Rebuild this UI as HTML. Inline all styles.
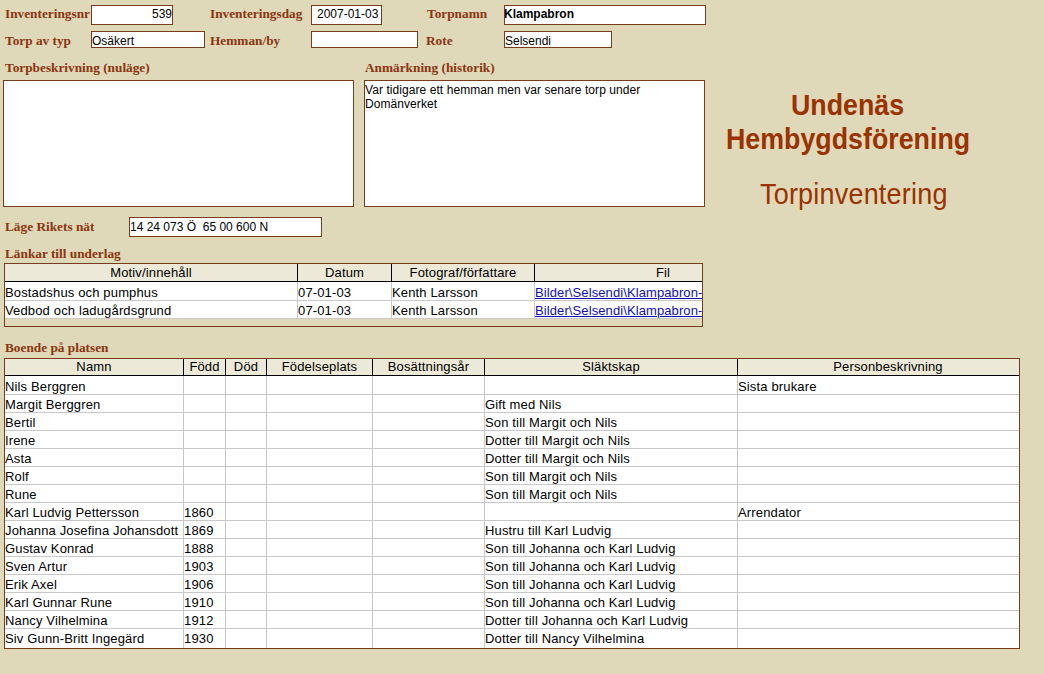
<!DOCTYPE html>
<html><head><meta charset="utf-8"><style>
html,body{margin:0;padding:0;}
body{width:1044px;height:674px;overflow:hidden;position:relative;background:#dfd8b9;font-family:"Liberation Sans",sans-serif;}
.lbl{position:absolute;font-family:"Liberation Serif",serif;font-weight:bold;font-size:13.3px;line-height:16px;color:#8a3510;white-space:nowrap;}
.box{position:absolute;background:#fff;border:1px solid #763c1c;overflow:hidden;font-size:12px;line-height:14px;color:#000;white-space:nowrap;}
.title{position:absolute;font-size:26px;line-height:30px;color:#993300;white-space:nowrap;}
.frame{position:absolute;border:1px solid #763c1c;}
.sep{position:absolute;height:1px;background:#c8c8c8;}
.vsep{position:absolute;width:1px;background:#c8c8c8;}
.hdr{position:absolute;text-align:center;font-size:13px;letter-spacing:0.15px;line-height:16px;color:#000;white-space:nowrap;overflow:hidden;}
.cell{position:absolute;font-size:13px;letter-spacing:0.15px;line-height:17px;color:#000;white-space:nowrap;overflow:hidden;height:17px;}
.link{color:#1010b0;text-decoration:underline;letter-spacing:0.1px;overflow:visible;}
</style></head><body>

<div class="lbl" style="left:5px;top:6px;">Inventeringsnr</div>
<div class="lbl" style="left:210px;top:6px;">Inventeringsdag</div>
<div class="lbl" style="left:427px;top:6px;">Torpnamn</div>
<div class="lbl" style="left:5px;top:33px;">Torp av typ</div>
<div class="lbl" style="left:210px;top:33px;">Hemman/by</div>
<div class="lbl" style="left:426px;top:33px;">Rote</div>
<div class="lbl" style="left:5px;top:60px;">Torpbeskrivning (nuläge)</div>
<div class="lbl" style="left:365px;top:60px;">Anmärkning (historik)</div>
<div class="lbl" style="left:5px;top:219px;">Läge Rikets nät</div>
<div class="lbl" style="left:5px;top:246px;">Länkar till underlag</div>
<div class="lbl" style="left:5px;top:340px;">Boende på platsen</div>
<div class="box" style="left:91px;top:5px;width:80px;height:18px"><span style="position:absolute;right:0px;top:1px;">539</span></div>
<div class="box" style="left:311px;top:5px;width:69px;height:18px"><span style="position:absolute;left:5px;top:1px;">2007-01-03</span></div>
<div class="box" style="left:504px;top:5px;width:200px;height:18px"><span style="position:absolute;left:-1px;top:1px;font-weight:bold">Klampabron</span></div>
<div class="box" style="left:91px;top:31px;width:112px;height:15px"><span style="position:absolute;left:0px;top:2px;">Osäkert</span></div>
<div class="box" style="left:311px;top:31px;width:105px;height:15px"></div>
<div class="box" style="left:504px;top:31px;width:106px;height:15px"><span style="position:absolute;left:0px;top:2px;">Selsendi</span></div>
<div class="box" style="left:3px;top:80px;width:349px;height:125px"></div>
<div class="box" style="left:364px;top:80px;width:339px;height:125px"><span style="position:absolute;left:0px;top:2px;line-height:14px;letter-spacing:0.07px">Var tidigare ett hemman men var senare torp under<br>Domänverket</span></div>
<div class="box" style="left:129px;top:217px;width:191px;height:18px"><span style="position:absolute;left:0px;top:2px;">14 24 073 Ö&nbsp; 65 00 600 N</span></div>
<div class="title" style="left:791px;top:90px;font-weight:bold;font-size:26.8px;transform:scaleY(1.08)">Undenäs</div>
<div class="title" style="left:726px;top:124px;font-weight:bold;font-size:26.8px;transform:scaleY(1.08)">Hembygdsförening</div>
<div class="title" style="left:760px;top:179px;font-size:27px;letter-spacing:0.2px;transform:scaleY(1.08)">Torpinventering</div>
<div style="position:absolute;left:5px;top:264px;width:697px;height:17px;background:#ece9d8"></div>
<div style="position:absolute;left:5px;top:281px;width:697px;height:1px;background:#000"></div>
<div style="position:absolute;left:5px;top:282px;width:697px;height:37px;background:#fff"></div>
<div class="sep" style="left:5px;top:300px;width:697px"></div>
<div class="sep" style="left:5px;top:318px;width:697px"></div>
<div style="position:absolute;left:297px;top:264px;width:1px;height:17px;background:#000"></div>
<div class="vsep" style="left:297px;top:282px;height:37px"></div>
<div style="position:absolute;left:391px;top:264px;width:1px;height:17px;background:#000"></div>
<div class="vsep" style="left:391px;top:282px;height:37px"></div>
<div style="position:absolute;left:534px;top:264px;width:1px;height:17px;background:#000"></div>
<div class="vsep" style="left:534px;top:282px;height:37px"></div>
<div class="hdr" style="left:5px;top:265px;width:292px;height:16px">Motiv/innehåll</div>
<div class="hdr" style="left:298px;top:265px;width:93px;height:16px">Datum</div>
<div class="hdr" style="left:392px;top:265px;width:142px;height:16px">Fotograf/författare</div>
<div class="hdr" style="left:535px;top:265px;width:256px;height:16px">Fil</div>
<div class="cell" style="left:5px;top:284px;width:291px">Bostadshus och pumphus</div>
<div class="cell" style="left:298px;top:284px;width:92px">07-01-03</div>
<div class="cell" style="left:392px;top:284px;width:141px">Kenth Larsson</div>
<div class="cell link" style="left:535px;top:284px;width:166px">Bilder\Selsendi\Klampabron-</div>
<div class="cell" style="left:5px;top:302px;width:291px">Vedbod och ladugårdsgrund</div>
<div class="cell" style="left:298px;top:302px;width:92px">07-01-03</div>
<div class="cell" style="left:392px;top:302px;width:141px">Kenth Larsson</div>
<div class="cell link" style="left:535px;top:302px;width:166px">Bilder\Selsendi\Klampabron-</div>
<div class="frame" style="left:4px;top:263px;width:697px;height:62px"></div>
<div style="position:absolute;left:5px;top:359px;width:1014px;height:16px;background:#ece9d8"></div>
<div style="position:absolute;left:5px;top:375px;width:1014px;height:1px;background:#000"></div>
<div style="position:absolute;left:5px;top:376px;width:1014px;height:272px;background:#fff"></div>
<div class="sep" style="left:5px;top:394px;width:1014px"></div>
<div class="sep" style="left:5px;top:412px;width:1014px"></div>
<div class="sep" style="left:5px;top:430px;width:1014px"></div>
<div class="sep" style="left:5px;top:448px;width:1014px"></div>
<div class="sep" style="left:5px;top:466px;width:1014px"></div>
<div class="sep" style="left:5px;top:484px;width:1014px"></div>
<div class="sep" style="left:5px;top:502px;width:1014px"></div>
<div class="sep" style="left:5px;top:520px;width:1014px"></div>
<div class="sep" style="left:5px;top:538px;width:1014px"></div>
<div class="sep" style="left:5px;top:556px;width:1014px"></div>
<div class="sep" style="left:5px;top:574px;width:1014px"></div>
<div class="sep" style="left:5px;top:592px;width:1014px"></div>
<div class="sep" style="left:5px;top:610px;width:1014px"></div>
<div class="sep" style="left:5px;top:628px;width:1014px"></div>
<div style="position:absolute;left:183px;top:359px;width:1px;height:16px;background:#000"></div>
<div class="vsep" style="left:183px;top:376px;height:272px"></div>
<div style="position:absolute;left:225px;top:359px;width:1px;height:16px;background:#000"></div>
<div class="vsep" style="left:225px;top:376px;height:272px"></div>
<div style="position:absolute;left:266px;top:359px;width:1px;height:16px;background:#000"></div>
<div class="vsep" style="left:266px;top:376px;height:272px"></div>
<div style="position:absolute;left:372px;top:359px;width:1px;height:16px;background:#000"></div>
<div class="vsep" style="left:372px;top:376px;height:272px"></div>
<div style="position:absolute;left:484px;top:359px;width:1px;height:16px;background:#000"></div>
<div class="vsep" style="left:484px;top:376px;height:272px"></div>
<div style="position:absolute;left:737px;top:359px;width:1px;height:16px;background:#000"></div>
<div class="vsep" style="left:737px;top:376px;height:272px"></div>
<div class="hdr" style="left:5px;top:359px;width:178px;height:16px">Namn</div>
<div class="hdr" style="left:184px;top:359px;width:41px;height:16px">Född</div>
<div class="hdr" style="left:226px;top:359px;width:40px;height:16px">Död</div>
<div class="hdr" style="left:267px;top:359px;width:105px;height:16px">Födelseplats</div>
<div class="hdr" style="left:373px;top:359px;width:111px;height:16px">Bosättningsår</div>
<div class="hdr" style="left:485px;top:359px;width:252px;height:16px">Släktskap</div>
<div class="hdr" style="left:738px;top:359px;width:300px;height:16px">Personbeskrivning</div>
<div class="cell" style="left:5px;top:378px;width:177px">Nils Berggren</div>
<div class="cell" style="left:738px;top:378px;width:280px">Sista brukare</div>
<div class="cell" style="left:5px;top:396px;width:177px">Margit Berggren</div>
<div class="cell" style="left:485px;top:396px;width:251px">Gift med Nils</div>
<div class="cell" style="left:5px;top:414px;width:177px">Bertil</div>
<div class="cell" style="left:485px;top:414px;width:251px">Son till Margit och Nils</div>
<div class="cell" style="left:5px;top:432px;width:177px">Irene</div>
<div class="cell" style="left:485px;top:432px;width:251px">Dotter till Margit och Nils</div>
<div class="cell" style="left:5px;top:450px;width:177px">Asta</div>
<div class="cell" style="left:485px;top:450px;width:251px">Dotter till Margit och Nils</div>
<div class="cell" style="left:5px;top:468px;width:177px">Rolf</div>
<div class="cell" style="left:485px;top:468px;width:251px">Son till Margit och Nils</div>
<div class="cell" style="left:5px;top:486px;width:177px">Rune</div>
<div class="cell" style="left:485px;top:486px;width:251px">Son till Margit och Nils</div>
<div class="cell" style="left:5px;top:504px;width:177px">Karl Ludvig Pettersson</div>
<div class="cell" style="left:184px;top:504px;width:40px">1860</div>
<div class="cell" style="left:738px;top:504px;width:280px">Arrendator</div>
<div class="cell" style="left:5px;top:522px;width:177px">Johanna Josefina Johansdott</div>
<div class="cell" style="left:184px;top:522px;width:40px">1869</div>
<div class="cell" style="left:485px;top:522px;width:251px">Hustru till Karl Ludvig</div>
<div class="cell" style="left:5px;top:540px;width:177px">Gustav Konrad</div>
<div class="cell" style="left:184px;top:540px;width:40px">1888</div>
<div class="cell" style="left:485px;top:540px;width:251px">Son till Johanna och Karl Ludvig</div>
<div class="cell" style="left:5px;top:558px;width:177px">Sven Artur</div>
<div class="cell" style="left:184px;top:558px;width:40px">1903</div>
<div class="cell" style="left:485px;top:558px;width:251px">Son till Johanna och Karl Ludvig</div>
<div class="cell" style="left:5px;top:576px;width:177px">Erik Axel</div>
<div class="cell" style="left:184px;top:576px;width:40px">1906</div>
<div class="cell" style="left:485px;top:576px;width:251px">Son till Johanna och Karl Ludvig</div>
<div class="cell" style="left:5px;top:594px;width:177px">Karl Gunnar Rune</div>
<div class="cell" style="left:184px;top:594px;width:40px">1910</div>
<div class="cell" style="left:485px;top:594px;width:251px">Son till Johanna och Karl Ludvig</div>
<div class="cell" style="left:5px;top:612px;width:177px">Nancy Vilhelmina</div>
<div class="cell" style="left:184px;top:612px;width:40px">1912</div>
<div class="cell" style="left:485px;top:612px;width:251px">Dotter till Johanna och Karl Ludvig</div>
<div class="cell" style="left:5px;top:630px;width:177px">Siv Gunn-Britt Ingegärd</div>
<div class="cell" style="left:184px;top:630px;width:40px">1930</div>
<div class="cell" style="left:485px;top:630px;width:251px">Dotter till Nancy Vilhelmina</div>
<div class="frame" style="left:4px;top:358px;width:1014px;height:289px"></div>
</body></html>
